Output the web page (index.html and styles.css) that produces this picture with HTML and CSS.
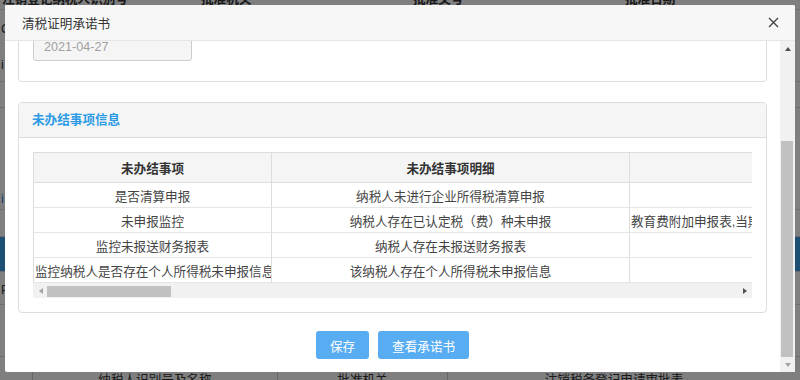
FILE: index.html
```html
<!doctype html>
<html>
    <head>
        <meta charset="utf-8">
        <link rel="stylesheet" href="styles.css">
    </head>
    <body>
        <div class="page">
            <div class="bg-head">
                <span class="bh bh1">注销登记纳税人识别号</span>
                <span class="bh bh2">批准机关</span>
                <span class="bh bh3">批准文号</span>
                <span class="bh bh4">批准日期</span>
            </div>
            <div class="bg-row ra"><span>C 纳税人名称</span><span>i 登记序号</span></div>
            <div class="bg-row rb"></div>
            <div class="bg-row rc"><span class="link">i 查看详情</span></div>
            <div class="bg-row rd"></div>
            <div class="bg-row re"></div>
            <div class="bg-row rf"><span>P 注销原因</span></div>
            <div class="bg-row rg"></div>
            <div class="bg-foot">
                <span class="bf bf0">-</span>
                <span class="bf bf1">纳税人识别号及名称</span>
                <span class="bf bf2">批准机关</span>
                <span class="bf bf3">注销税务登记申请审批表</span>
            </div>
        </div>

        <div class="mask"></div>

        <div class="modal">
            <div class="modal-header">
                <span class="modal-title">清税证明承诺书</span>
                <span class="close">
                    <svg width="11" height="11" viewBox="0 0 11 11"><path d="M1 1L10 10M10 1L1 10" stroke="#444" stroke-width="1.4" fill="none"/></svg>
                </span>
            </div>
            <div class="modal-body">
                <div class="body-view" id="bodyView">
                    <div class="panel">
                        <div class="panel-heading">承诺信息</div>
                        <div class="panel-body pb-form">
                            <p class="hint">纳税人已结清应纳税款、滞纳金及罚款，承诺如实办理清税。</p>
                            <div class="field-label">承诺日期</div>
                            <input class="form-control" type="text" value="2021-04-27" disabled>
                        </div>
                    </div>

                    <div class="panel panel-last">
                        <div class="panel-heading blue">未办结事项信息</div>
                        <div class="panel-body">
                            <div class="table-wrap">
                                <table class="grid">
                                    <tr>
                                        <th class="w1">未办结事项</th>
                                        <th class="w2">未办结事项明细</th>
                                        <th class="w3">未办结事项说明</th>
                                    </tr>
                                    <tr>
                                        <td>是否清算申报</td>
                                        <td>纳税人未进行企业所得税清算申报</td>
                                        <td class="left"></td>
                                    </tr>
                                    <tr>
                                        <td>未申报监控</td>
                                        <td>纳税人存在已认定税（费）种未申报</td>
                                        <td class="left">教育费附加申报表,当期未申报;城市维护建设税申报表,当期未申报;地方教育附加申报表,当期未申报;印花税纳税申报表,当期未申报</td>
                                    </tr>
                                    <tr>
                                        <td>监控未报送财务报表</td>
                                        <td>纳税人存在未报送财务报表</td>
                                        <td class="left"></td>
                                    </tr>
                                    <tr>
                                        <td>监控纳税人是否存在个人所得税未申报信息</td>
                                        <td>该纳税人存在个人所得税未申报信息</td>
                                        <td class="left"></td>
                                    </tr>
                                </table>
                            </div>
                            <div class="hscroll">
                                <span class="sb-btn sb-left"></span>
                                <span class="sb-thumb-h"></span>
                                <span class="sb-space"></span>
                                <span class="sb-btn sb-right"></span>
                            </div>
                        </div>
                    </div>

                    <div class="btns">
                        <button class="btn">保存</button>
                        <button class="btn">查看承诺书</button>
                    </div>
                </div>
                <div class="vscroll">
                    <span class="sb-btn sb-up"></span>
                    <span class="sb-space"></span>
                    <span class="sb-thumb-v"></span>
                    <span class="sb-btn sb-down"></span>
                </div>
            </div>
        </div>

<script>
    var view = document.getElementById("bodyView");
    view.scrollTop = view.scrollHeight;
</script>
    </body>
</html>
```

FILE: styles.css
```css
*
{
    box-sizing: border-box;
}
html, body
{
    margin: 0;
    height: 100%;
    overflow: hidden;
}
body
{
    font-family: "Liberation Sans", "Noto Sans CJK SC", sans-serif;
    font-size: 12.6px;
    color: #333;
    background: #fff;
}

/* page behind the dialog */
.page
{
    margin-top: -12px;
}
.bg-head
{
    display: flex;
    height: 22px;
    line-height: 22px;
    font-weight: bold;
    border-bottom: 1px solid #ddd;
}
.bh1 { width: 201px; padding-left: 2px; }
.bh2 { width: 212px; }
.bh3 { width: 212px; }
.bg-row
{
    display: flex;
    flex-direction: column;
    justify-content: space-around;
    padding-left: 1px;
    border-bottom: 1px solid #ddd;
}
.ra { height: 72px; }
.rb { height: 26px; }
.rc { height: 102px; justify-content: flex-end; }
.rd { height: 27px; }
.re { height: 35px; background: #3a9ee8; }
.rf { height: 33px; }
.rg { height: 52px; }
.link { color: #1a7fd0; padding-bottom: 2px; }
.bg-foot
{
    display: flex;
    height: 28px;
    line-height: 28px;
    margin-top: 9px;
}
.bf
{
    text-align: center;
    border-right: 1px solid #ccc;
}
.bf0 { width: 33px; }
.bf1 { width: 245px; }
.bf2 { width: 170px; }
.bf3 { width: 332px; border-right: 0; }

.mask
{
    position: fixed;
    left: 0;
    top: 0;
    right: 0;
    bottom: 0;
    background: rgba(0, 0, 0, 0.5);
}

/* dialog */
.modal
{
    position: fixed;
    left: 5px;
    top: 5px;
    width: 790px;
    height: 367px;
    display: flex;
    flex-direction: column;
    background: #fff;
    border-radius: 2px;
}
.modal-header
{
    flex: none;
    height: 36px;
    display: flex;
    align-items: center;
    justify-content: space-between;
    padding: 0 16px 0 17px;
    background: #f7f7f7;
    border-bottom: 1px solid #e5e5e5;
    border-radius: 2px 2px 0 0;
}
.close
{
    display: block;
    width: 11px;
    height: 11px;
    margin-top: -1px;
}
.close svg
{
    display: block;
}
.modal-body
{
    flex: 1;
    min-height: 0;
    display: flex;
}
.body-view
{
    flex: 1;
    overflow: hidden;
    padding: 15px 13px 13px 13px;
}

/* scrollbars, classic look */
.vscroll
{
    flex: none;
    width: 15px;
    display: flex;
    flex-direction: column;
    background: #f1f1f1;
}
.hscroll
{
    display: flex;
    height: 15px;
    background: #f1f1f1;
}
.sb-btn
{
    flex: none;
    width: 15px;
    height: 15px;
    display: flex;
    align-items: center;
    justify-content: center;
}
.sb-btn::before
{
    content: "";
    width: 0;
    height: 0;
    border: 3.5px solid transparent;
}
.sb-up::before
{
    border-top-width: 0;
    border-bottom: 4px solid #505050;
}
.sb-down::before
{
    border-bottom-width: 0;
    border-top: 4px solid #a3a3a3;
}
.sb-left::before
{
    border-left-width: 0;
    border-right: 4px solid #a3a3a3;
}
.sb-right::before
{
    border-right-width: 0;
    border-left: 4px solid #505050;
}
.sb-space
{
    flex: 1;
}
.sb-thumb-v
{
    flex: none;
    height: 216px;
    margin: 0 2px 0 1px;
    background: #c1c1c1;
}
.sb-thumb-h
{
    flex: none;
    width: 124px;
    margin: 3px 0 1px -1px;
    background: #c1c1c1;
}

.panel
{
    border: 1px solid #ddd;
    border-radius: 4px;
    margin-bottom: 20px;
}
.panel-last
{
    margin-bottom: 18px;
}
.panel-heading
{
    height: 35px;
    line-height: 34px;
    padding: 0 13px;
    background: #f5f5f5;
    border-bottom: 1px solid #ddd;
    border-radius: 3px 3px 0 0;
    font-weight: bold;
}
.panel-heading.blue
{
    color: #2b9be6;
}
.panel-body
{
    padding: 14px;
}
.pb-form
{
    padding-bottom: 20px;
}
.hint
{
    margin: 0 0 8px;
    height: 20px;
    line-height: 20px;
}
.field-label
{
    height: 21px;
    line-height: 21px;
    margin-bottom: 6px;
}
.form-control
{
    display: block;
    width: 159px;
    height: 28px;
    padding: 0 10px;
    border: 1px solid #ccc;
    border-radius: 3px;
    background: #f5f5f5;
    color: #a0a0a0;
    font: inherit;
}

.table-wrap
{
    overflow: hidden;
}
.grid
{
    table-layout: fixed;
    width: 3995px;
    border-collapse: separate;
    border-spacing: 0;
    border-top: 1px solid #ddd;
    border-left: 1px solid #ddd;
}
.grid th, .grid td
{
    padding: 0 1px;
    white-space: nowrap;
    overflow: hidden;
    text-align: center;
    border-right: 1px solid #ddd;
    border-bottom: 1px solid #e6e6e6;
}
.grid th
{
    height: 30px;
    background: #f5f5f5;
    font-weight: bold;
    border-bottom-color: #ddd;
}
.grid td
{
    height: 25px;
    color: #444;
}
.grid td.left
{
    text-align: left;
}
.w1 { width: 238px; }
.w2 { width: 358px; }
.w3 { width: 3398px; }

.btns
{
    display: flex;
    justify-content: center;
    gap: 9px;
}
.btn
{
    height: 28px;
    padding: 0 14px;
    border: 0;
    border-radius: 3px;
    background: #58adf2;
    color: #fff;
    font: inherit;
}
```
